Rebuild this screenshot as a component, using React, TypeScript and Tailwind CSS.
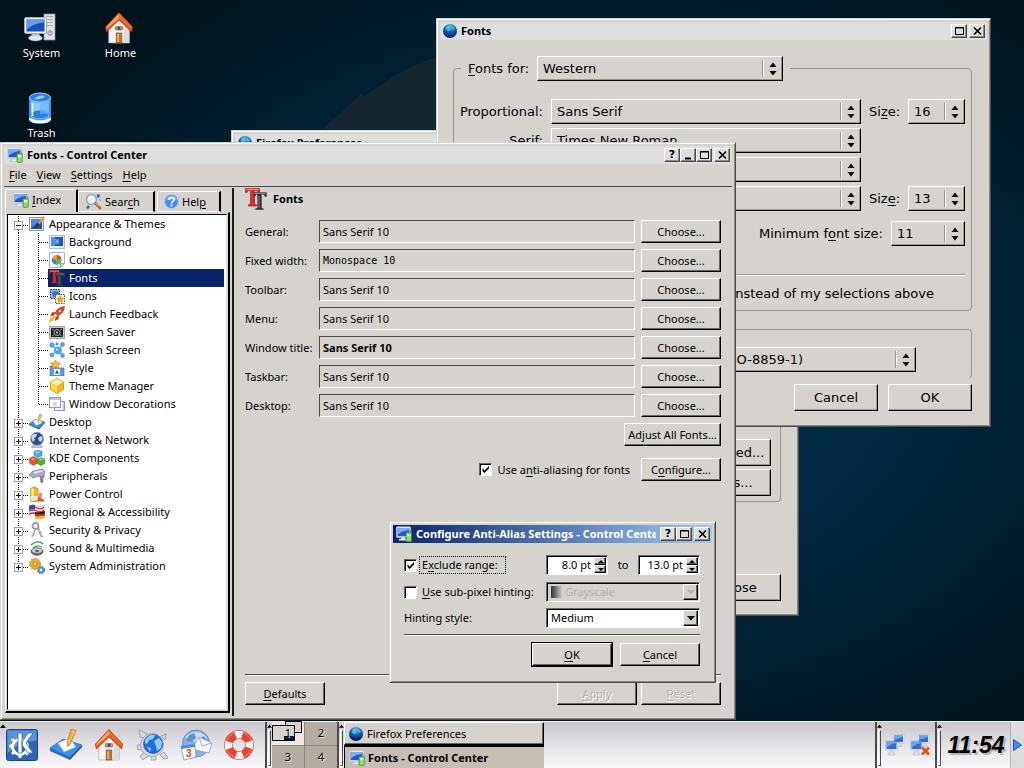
import type { ReactNode } from "react";

type IconProps = { size?: number };

/* ---------- shared class strings ---------- */

const kdeFont = "font-['Noto_Sans','DejaVu_Sans',sans-serif] text-[11px] leading-[16px]";
const gtkFont = "font-['DejaVu_Sans','Noto_Sans',sans-serif] text-[13px] leading-[18px]";
const frame =
  "absolute flex flex-col border border-[#d6d3ce] border-r-[#4c4b47] border-b-[#4c4b47] bg-[#d6d3ce] p-[3px] text-black shadow-[inset_1px_1px_0_#fff,inset_-1px_-1px_0_#8b8984]";
const raised =
  "border border-t-white border-l-white border-r-black border-b-black bg-[#d6d3ce] shadow-[inset_-1px_-1px_0_#66655f]";
const gtkRaised =
  "border border-t-white border-l-white border-r-black border-b-black bg-[#d6d3ce] shadow-[inset_-1px_-1px_0_#9c9686]";
const sunken =
  "border border-t-[#66655f] border-l-[#66655f] border-r-white border-b-white bg-white shadow-[inset_1px_1px_0_#000]";

/* ---------- icons ---------- */

function ControlIcon({ size = 16 }: IconProps) {
  return (
    <svg width={size} height={size} viewBox="0 0 16 16">
      <path d="M5 11h4v2h2v1.500H3V13h2z" fill="#e3e6ec" stroke="#a9b0bb" strokeWidth=".5" />
      <rect x=".3" y=".8" width="14.400" height="10.700" rx="1" fill="#f2f4f8" stroke="#b3bac5" strokeWidth=".6" />
      <rect x="1.500" y="2" width="12" height="8.300" fill="#2259c6" />
      <path d="M1.500 2h12v2Q6 4.500 1.500 9z" fill="#79acf4" />
      <rect x="10" y="6.500" width="5.500" height="9" rx=".8" fill="#6cc84c" stroke="#4b9a35" strokeWidth=".6" />
      <rect x="11" y="8" width="3.500" height="2.500" fill="#dcf6cd" />
      <path d="M11 12h3.500M11 13.800h3.500" stroke="#c6efb3" strokeWidth=".8" />
      <path d="M14.800 6.500V4" stroke="#888" strokeWidth=".8" />
    </svg>
  );
}

function GlobeBall({ size = 14 }: IconProps) {
  return (
    <svg width={size} height={size} viewBox="0 0 14 14">
      <defs>
        <radialGradient id="ball" cx=".5" cy=".18" r=".85">
          <stop offset="0" stopColor="#4ec0ef" />
          <stop offset=".45" stopColor="#1367b4" />
          <stop offset="1" stopColor="#020a4e" />
        </radialGradient>
      </defs>
      <circle cx="7" cy="7" r="7" fill="url(#ball)" />
      <path d="M3 3q2-2 4-1l-1 2 2 1-2 2-3-1zM9 2l3 2-1 2-2-1z" fill="#7fd4f4" opacity=".55" />
    </svg>
  );
}

function FontsIcon({ size = 16 }: IconProps) {
  return (
    <svg width={size} height={size} viewBox="0 0 22 22">
      <path d="M.5.500h14v4h-1.500l-1-2H9.500V16l2 .8V18h-8v-1.200l2-.8V2.500H3l-1 2H.500z" fill="#e8281e" stroke="#a81010" strokeWidth=".6" />
      <path d="M1.500 1.500h12" stroke="#ff9a90" />
      <path d="M8.500 4.500h13v4H20l-1-2h-2.500V20l2 .8v1h-8v-1l2-.8V6.500H11l-1 2H8.500z" fill="#2e2e2e" stroke="#555" strokeWidth=".6" />
      <path d="M9.500 5.500h11M14 8v12" stroke="#8a8a8a" />
    </svg>
  );
}

function SearchIcon() {
  return (
    <svg width="17" height="17" viewBox="0 0 17 17">
      <path d="M1 15l2-3 2 2-2 2zM12 1l3 1-1 3-2-1zM14 6l2 1-1 1z" fill="#2d63bd" />
      <circle cx="6.500" cy="6.500" r="5" fill="#e9f1f8" stroke="#9aa3ad" strokeWidth="1.500" />
      <path d="M4 6q0-2.500 3-2.500" stroke="#fff" strokeWidth="1.500" fill="none" />
      <path d="M10.500 10.500l4.500 4.500" stroke="#a8623c" strokeWidth="2.600" strokeLinecap="round" />
      <path d="M10.500 10l4 4" stroke="#edb48a" strokeWidth="1" />
    </svg>
  );
}

function HelpIcon() {
  return (
    <svg width="15" height="15" viewBox="0 0 15 15">
      <circle cx="7.500" cy="7.500" r="7" fill="#4d8bf0" stroke="#b8cdf3" />
      <path d="M2 6q1-4 5.500-4T13 6q-5-1-11 0z" fill="#86b4fa" />
      <path d="M5 6q0-2.500 2.500-2.500T10 5.500q0 1.200-1.300 2T7.500 9.500" fill="none" stroke="#fff" strokeWidth="1.600" />
      <rect x="6.600" y="10.500" width="1.800" height="1.800" fill="#fff" />
    </svg>
  );
}

// 16px artwork for the entries of the module tree, keyed by entry name
const treeArt: Record<string, ReactNode> = {
  "Appearance & Themes": (
    <>
      <rect x=".5" y="1.500" width="14" height="13" fill="#eceff4" stroke="#8f98a5" />
      <rect x="2" y="3" width="11" height="10" fill="#1b4fb4" />
      <path d="M2 3h11L2 12z" fill="#4c8be8" />
      <path d="M14.500 0L9 7l1.500 1.500L16 1.500z" fill="#e59a2c" />
      <path d="M9 7l1.500 1.500Q9 12 5 12q2-2 2-3.500z" fill="#3a3027" />
    </>
  ),
  Background: (
    <>
      <rect x=".5" y="1.500" width="15" height="13" fill="#e7ebf2" stroke="#b3bccb" />
      <rect x="2" y="3" width="12" height="9" fill="#1f56bd" />
      <path d="M2 3h4v9H2z" fill="#4f8ee4" />
      <path d="M6 5l4 5M10 5l-4 5M5.500 7.500h5M8 4.500v6" stroke="#8ab9f3" strokeWidth=".8" />
    </>
  ),
  Colors: (
    <>
      <path d="M.5.500h15v11l-4 4H.500z" fill="#fff" stroke="#b0b0b0" />
      <path d="M15.500 11.500h-4v4z" fill="#dcdcdc" stroke="#a0a0a0" />
      <path d="M7.500 8V3A4.800 4.800 0 003 6z" fill="#f6a313" />
      <path d="M7.500 8V3A4.800 4.800 0 0112.500 7z" fill="#e94234" />
      <path d="M7.500 8L12.500 7q1 4.500-4.500 6z" fill="#52b536" />
      <path d="M7.500 8L3 6Q1.500 11.500 8 13z" fill="#3e7fe2" />
    </>
  ),
  Icons: (
    <>
      <path d="M1.500 1.500h9v9h-9z" fill="#8db6f0" stroke="#333" strokeDasharray="1.500 1" />
      <path d="M3 4l3-1 4 1-1 5H4z" fill="#3a72cc" />
      <path d="M6.500 6.500h9v9h-9z" fill="#fdeecb" stroke="#555" strokeDasharray="1.500 1" />
      <path d="M11 7l1.300 2.700 2.700.3-2 2 .5 3-2.500-1.500L8.500 15l.5-3-2-2 2.700-.3z" fill="#f0992b" />
    </>
  ),
  "Launch Feedback": (
    <>
      <path d="M15.500.500Q9 1 6 7l3 3q6-3 6.500-9.500z" fill="#ea4a26" stroke="#a62b12" strokeWidth=".6" />
      <circle cx="11" cy="5" r="1.600" fill="#dceafb" stroke="#8a2a12" strokeWidth=".5" />
      <path d="M6.500 6L3 6.500 1 10l4-.5zM10 9.500l-.5 3.500-3.500 2 .5-4z" fill="#c93618" />
      <path d="M5.500 9.500L1 12l-1 4 4-1 2.500-4.500z" fill="#f9b52b" />
    </>
  ),
  "Screen Saver": (
    <>
      <rect x=".5" y="2.500" width="15" height="12" fill="#c9c9c9" stroke="#a5a5a5" />
      <rect x="2" y="4" width="12" height="9" fill="#222" />
      <circle cx="8" cy="8.500" r="3" fill="none" stroke="#a9a9a9" />
      <circle cx="8" cy="8.500" r="1" fill="#ddd" />
      <path d="M3 5l2 1M13 5l-2 1M3 12l2-1M13 12l-2-1" stroke="#888" />
    </>
  ),
  "Splash Screen": (
    <g fill="#4fa9f0" stroke="#2377c4" strokeWidth=".5">
      <circle cx="9" cy="8.500" r="3.600" />
      <circle cx="3" cy="3" r="2.300" />
      <circle cx="13.500" cy="2.500" r="2" />
      <circle cx="3" cy="13" r="2" />
      <circle cx="13.500" cy="13.500" r="2" />
      <circle cx="8" cy="2" r="1.200" />
      <path d="M4 4l4 4M13 3l-3 5M4 12l4-3M13 13l-3-4" stroke="#4fa9f0" strokeWidth="1.400" />
      <circle cx="8" cy="7.500" r="1" fill="#d9efff" stroke="none" />
    </g>
  ),
  Style: (
    <>
      <path d="M1 6h7l2 2h5v8H1z" fill="#5c9de8" stroke="#2d68b8" strokeWidth=".6" />
      <rect x="5" y="9" width="6" height="6" fill="#eef5fd" />
      <path d="M8 10l2 3.500H6z" fill="#1d4b91" />
      <path d="M6.500 0L8 3l3.500.2-2.500 2L10 9 6.500 7 3 9l1-3.800-2.500-2L5 3z" fill="#fac02a" stroke="#b9781a" strokeWidth=".6" />
    </>
  ),
  "Theme Manager": (
    <>
      <path d="M8 .5l6.500 3.500v7.500L8 15.500l-6.500-4V4z" fill="#f0b81c" stroke="#c48510" strokeWidth=".7" />
      <path d="M8 1l6 3-6 4-6-4z" fill="#fff1a2" />
      <path d="M2 4l6 4v7l-6-4z" fill="#fad84a" />
    </>
  ),
  "Window Decorations": (
    <>
      <rect x="5.500" y="5.500" width="10" height="9" fill="#f5f8fe" stroke="#8b9dc4" />
      <rect x=".5" y="1.500" width="11" height="10" fill="#fff" stroke="#8b9dc4" />
      <path d="M1 2h10v2H1zM14 6h1v8h-1z" fill="#b6c7ea" />
      <path d="M4 6l4 4M8 6l-4 4M6 5v6M3.500 8h5" stroke="#c3cbdc" strokeWidth=".8" />
    </>
  ),
  Desktop: <DesktopArt />,
  "Internet & Network": (
    <>
      <path d="M4 12.500h8l1.500 3h-11z" fill="#c2c6ce" stroke="#868d99" strokeWidth=".5" />
      <circle cx="8" cy="6.800" r="6.500" fill="#2a4c8e" stroke="#8e9db8" strokeWidth=".8" />
      <path d="M3 3q3-2 5-1L7 5 5 6l1 2-2 2Q1 6 3 3zM9 6l3-2 2 2-2 4-2-1z" fill="#cbd7ea" />
    </>
  ),
  "KDE Components": (
    <>
      <path d="M9 0l4 1.500v4L9 7.500 5 5.500v-4z" fill="#45aaf0" stroke="#1c74ba" strokeWidth=".5" />
      <path d="M4.500 6.500l4 2v4.500l-4 2.500-4-2.500V8.500z" fill="#f0512b" stroke="#af2c10" strokeWidth=".5" />
      <path d="M12 7.500l3.800 2v4L12 15.500l-3.800-2v-4z" fill="#47b83c" stroke="#207d18" strokeWidth=".5" />
      <path d="M6 2l3-1 2 1-3 2zM2 9l2.500-1L6 9l-2 1.500zM10 9.500l2-1 2 1-2 1z" fill="#fff" opacity=".5" />
    </>
  ),
  Peripherals: (
    <>
      <path d="M0 7l4-4 9-2 3 2-1 6-3 1-2-2-6 2z" fill="#a7a7c8" stroke="#66668b" strokeWidth=".6" />
      <path d="M4 4l9-2 2 1-9 3z" fill="#e0e0f0" />
      <path d="M11 9l3-1v6l-2 1z" fill="#8585ac" stroke="#66668b" strokeWidth=".5" />
    </>
  ),
  "Power Control": (
    <>
      <rect x="3" y=".5" width="4" height="2" fill="#bdbdbd" />
      <rect x="1.500" y="2" width="7.500" height="13.500" rx="1" fill="#f6b92a" stroke="#b9781a" strokeWidth=".6" />
      <path d="M2.500 2.500h2v12.500h-2z" fill="#fff2b6" />
      <rect x="1.500" y="10" width="7.500" height="4" fill="#e8e8e8" />
      <path d="M9 15.500q-1-3 1-6l2 3 3 1 .5 2z" fill="#ea4a26" />
      <path d="M10 7h3v5h-3z" fill="#f08b62" />
    </>
  ),
  "Regional & Accessibility": (
    <>
      <path d="M0 2q4-2 8 0t7-1v8q-4 2-7 1t-8 1z" fill="#f6f2f2" stroke="#98706f" strokeWidth=".4" />
      <path d="M0 4q4-2 8 0t7-1M0 7q4-2 8 0t7-1M0 10q4-2 8 0t7-1" stroke="#d63030" strokeWidth="1.300" fill="none" />
      <path d="M0 2q3-2 6-1v4q-3 0-6 1z" fill="#2f4fa5" />
      <path d="M6 8q4 1 10-1v2.500q-5 2-10 1z" fill="#1b1b1b" />
      <path d="M6 10q5 1 10-1v2.500q-5 2-10 1z" fill="#dd2a22" />
      <path d="M6 12.500q5 1 10-1v2.500q-5 2-10 1z" fill="#f7bd1f" />
    </>
  ),
  "Security & Privacy": (
    <g fill="none" stroke="#9a9a9a">
      <circle cx="6.500" cy="4" r="3" strokeWidth="1.800" />
      <path d="M6 7l-3 8M9 6l4 9" strokeWidth="2" />
      <path d="M5.500 7l-3 8M9.500 7l4 7" stroke="#ececec" strokeWidth=".8" />
      <path d="M3.500 13l2 .8M11 11l2-.8" />
    </g>
  ),
  "Sound & Multimedia": (
    <>
      <path d="M2 5q6-6 12-1M4 8q4.500-4 9-.5" fill="none" stroke="#3fae49" strokeWidth="1.400" />
      <ellipse cx="8" cy="11.500" rx="6" ry="3.800" fill="#6d6d6d" stroke="#3e3e3e" strokeWidth=".6" />
      <ellipse cx="8" cy="10.500" rx="5" ry="2.300" fill="#cfcfcf" />
      <ellipse cx="8" cy="11" rx="2" ry="1.100" fill="#555" />
    </>
  ),
  "System Administration": (
    <>
      <circle cx="12" cy="12" r="3" fill="#4fa3ef" stroke="#1f68b4" strokeWidth=".6" />
      <circle cx="12" cy="12" r="3.500" fill="none" stroke="#2f7fd0" strokeWidth="1.200" strokeDasharray="1.800 1" />
      <circle cx="6" cy="6" r="4.800" fill="#f7ae22" stroke="#bb7611" strokeWidth=".6" />
      <circle cx="6" cy="6" r="5.300" fill="none" stroke="#e4981c" strokeWidth="1.400" strokeDasharray="2.200 1.200" />
      <circle cx="6" cy="6" r="2" fill="#f1e8d4" stroke="#9a620e" strokeWidth=".8" />
      <circle cx="12" cy="12" r="1.200" fill="#fff" />
    </>
  ),
};

function DesktopArt() {
  return (
    <>
      <path d="M0 9.500L6.500 5l9.500 3-6 6.500z" fill="#3d8fe8" stroke="#1c5fb4" strokeWidth=".3" />
      <path d="M0 9.500l10 4.500v1.500L0 11z" fill="#2a6cc4" />
      <path d="M10 14l6-6v1l-6 6.500z" fill="#1d56a6" />
      <path d="M4 7l6-2.500L13 9l-6 2.500z" fill="#f6f9fd" stroke="#9fb4cd" strokeWidth=".3" />
      <path d="M10.500 0l2.500.8-3 7-1.200 1L8.500 7z" fill="#f8a623" stroke="#b46d10" strokeWidth=".3" />
      <path d="M11 1l1 .3-3 6" fill="none" stroke="#ffd98a" strokeWidth=".5" />
    </>
  );
}

function ModuleIcon({ name }: { name: string }) {
  if (name === "Fonts") return <FontsIcon />;
  return (
    <svg width="16" height="16" viewBox="0 0 16 16">
      {treeArt[name]}
    </svg>
  );
}

function HomeArt() {
  return (
    <svg width="30" height="32" viewBox="0 0 32 32" preserveAspectRatio="none">
      <path d="M5 15v16h22V15L16 5z" fill="#f3f3f4" stroke="#a9a9ad" strokeWidth=".7" />
      <path d="M20 31h7V16l-5-5z" fill="#dcdce0" />
      <rect x="13" y="21" width="6" height="10" fill="#c9722e" stroke="#8a4a1c" strokeWidth=".7" />
      <path d="M14 22h2v8h-2z" fill="#eda768" />
      <rect x="12" y="14.500" width="8" height="3.500" rx="1" fill="#b29a85" stroke="#6a5848" strokeWidth=".6" />
      <circle cx="16" cy="16.200" r="1.500" fill="#4c4038" />
      <path d="M16 .5L1.500 15l1 5L16 8l13.500 12 1-5z" fill="#e8541d" stroke="#a53410" strokeWidth=".7" />
      <path d="M16 1.500L3 14.500 2.500 17 16 6z" fill="#ffa266" />
      <path d="M16 1.500V6l13 11V14z" fill="#f2682c" />
    </svg>
  );
}

function SystemArt() {
  return (
    <svg width="32" height="30" viewBox="0 0 32 30">
      <rect x="20" y="1" width="11" height="26" fill="#e2e2e5" stroke="#96969c" strokeWidth=".7" />
      <path d="M22 3.500h7M22 6.500h7M22 9.500h7M22 12.500h7" stroke="#a6a6ac" />
      <circle cx="26" cy="20" r="2.300" fill="#c4c4c9" stroke="#74747a" strokeWidth=".7" />
      <path d="M8 20h7l1 3h-9z" fill="#c6c8ce" />
      <ellipse cx="11.500" cy="25" rx="7" ry="3" fill="#e6e7ec" stroke="#9a9ca4" strokeWidth=".5" />
      <rect x=".5" y="4.500" width="22" height="16" rx="1.500" fill="#f2f3f6" stroke="#a3a7b0" />
      <rect x="2.500" y="6.500" width="18" height="12" fill="#1d4fb0" />
      <path d="M2.500 6.500h18v3Q9 10 2.500 17z" fill="#5f9bea" />
    </svg>
  );
}

function TrashArt() {
  return (
    <svg width="24" height="32" viewBox="0 0 24 32">
      <path d="M1 5v22Q2 31.500 12 31.500T23 27V5z" fill="#3f92f2" />
      <path d="M3 9v16q9 4.500 18 0V9Q12 13 3 9z" fill="#8fcbfd" />
      <ellipse cx="12" cy="22.500" rx="9" ry="4" fill="#2c7de0" />
      <path d="M12 10h9v13q-4-2-9-1z" fill="#6db4fa" opacity=".7" />
      <path d="M1 25.500Q12 31 23 25.500V28q-2 3.500-11 3.500T1 28z" fill="#f1f6fd" />
      <ellipse cx="12" cy="5.500" rx="10.500" ry="4.500" fill="#2a7ce4" stroke="#9bd0ff" strokeWidth="1" />
      <path d="M6 7q5-5 11-3-3 4-11 3z" fill="#8ecbff" />
      <path d="M4.500 11v13" stroke="#e6f4ff" strokeWidth="1.600" />
    </svg>
  );
}

function KMenuArt() {
  return (
    <svg width="32" height="32" viewBox="0 0 32 32">
      <rect x=".5" y=".5" width="31" height="31" rx="2" fill="#2c67b5" stroke="#184887" />
      <path d="M1.500 1.500h29v10Q12 13 1.500 24z" fill="#5b93d8" />
      <circle cx="14" cy="18" r="7.500" fill="none" stroke="#fff" strokeWidth="3" />
      <g stroke="#fff" strokeWidth="3">
        <path d="M3.500 17h4M6 25l3-3M14 25v4M22 25.500l-3-3M6 10l3 3" />
      </g>
      <path d="M12 4h4v20h-4zM16 13l6-9h5l-7 10 7 10h-5l-6-8z" fill="#fff" stroke="#2c67b5" strokeWidth=".8" />
    </svg>
  );
}

function KonquerorArt() {
  return (
    <svg width="32" height="32" viewBox="0 0 32 32">
      <g fill="#d7dae0" stroke="#868b95" strokeWidth=".7">
        <path d="M3 1l8 4-3 4-4-1zM1 16l6-1 1 5-6 1zM4 27l5-4 3 4-5 4zM15 31l1-6h4v6zM24 26l4-3 4 6-4 1zM25 7l5-2-1 6z" />
        <circle cx="16" cy="16" r="11.500" />
      </g>
      <circle cx="17" cy="15" r="9.500" fill="#1f6fe0" stroke="#0f409a" strokeWidth=".6" />
      <path d="M9 11q4-6 10-5l-2 4-4 1-1 3-3 1zM18 12l5-3 3 4-1 6-4 3-1-5zM11 18l4 1-1 4z" fill="#8fd0fb" />
    </svg>
  );
}

function KontactArt() {
  return (
    <svg width="32" height="32" viewBox="0 0 32 32">
      <circle cx="16" cy="14.500" r="13.500" fill="#86b4e6" stroke="#5282bb" strokeWidth=".8" />
      <path d="M5 8Q16-2 27 8q-5 6-11 5T5 8z" fill="#c6ddf6" />
      <path d="M9 6l5-2 2 5-5 4-5-1zM19 10l5-3 3 6-4 3z" fill="#5d92cf" />
      <path d="M1 17l14-2 1 13-12 3z" fill="#fff" stroke="#6b86b7" strokeWidth=".7" />
      <path d="M1 17l14-2v3L1.500 20z" fill="#4c8ae0" />
      <text x="6" y="28" fontSize="10" fontWeight="bold" fill="#e23b26" fontFamily="Liberation Sans">3</text>
      <path d="M15 14l4-6 13 6-3 10-14-3z" fill="#f5f4fc" stroke="#8a88b4" strokeWidth=".7" />
      <path d="M19 8.500l3 8.500 9.500-3" fill="none" stroke="#9a98c2" strokeWidth=".8" />
    </svg>
  );
}

function LifebuoyArt() {
  return (
    <svg width="30" height="30" viewBox="0 0 30 30">
      <circle cx="15" cy="15" r="10.500" fill="none" stroke="#b73222" strokeWidth="8.600" />
      <circle cx="15" cy="15" r="10.500" fill="none" stroke="#f6f3f2" strokeWidth="7.600" />
      <circle cx="15" cy="15" r="10.500" fill="none" stroke="#e5432c" strokeWidth="7.600" strokeDasharray="9.500 7" strokeDashoffset="-3" />
      <circle cx="15" cy="15" r="13" fill="none" stroke="#fff" strokeWidth="1" opacity=".35" />
    </svg>
  );
}

function NetworkArt({ broken = false }: { broken?: boolean }) {
  return (
    <svg width="20" height="22" viewBox="0 0 20 22">
      <g stroke="#b4b9c2" strokeWidth=".6">
        <rect x="8" y=".5" width="11" height="8.500" fill="#f2f4f8" />
        <path d="M12 9h3v2h2v1.500h-7V11h2z" fill="#dcdfe6" />
        <rect x=".5" y="6.500" width="12" height="9.500" fill="#f2f4f8" />
        <path d="M5 16h3v3h2v2H3v-2h2z" fill="#dcdfe6" />
      </g>
      <rect x="9" y="1.500" width="9" height="6.500" fill="#2f6fd8" />
      <rect x="1.500" y="7.500" width="10" height="7.500" fill="#2f6fd8" />
      <path d="M1.500 7.500h10V9Q5 10 1.500 14zM9 1.500h9v1.500L9 6z" fill="#69a2f0" />
      {broken && <path d="M12 13.500l7 7M19 13.500l-7 7" stroke="#ee4a1c" strokeWidth="2.600" />}
    </svg>
  );
}

/* ---------- window parts ---------- */

const glyphs: Record<string, ReactNode> = {
  Minimize: <path d="M3 9.500h6" stroke="#000" strokeWidth="2" />,
  Maximize: <path d="M2.500 2.500h8v7h-8zM2.500 3h8" fill="none" stroke="#000" />,
  Close: <path d="M3 2.500l7 7M10 2.500l-7 7" stroke="#000" strokeWidth="1.600" />,
};

function TitleButton({ name }: { name: string }) {
  return (
    <button
      aria-label={name}
      className="flex h-[14px] w-[16px] items-center justify-center border border-t-white border-l-white border-r-[#4c4b47] border-b-[#4c4b47] bg-[#dedede] font-['DejaVu_Sans',sans-serif] text-[11px] leading-[12px] font-bold text-black shadow-[inset_-1px_-1px_0_#8b8984]"
    >
      {name === "Help" ? "?" : <svg width="13" height="12" viewBox="0 0 13 12">{glyphs[name]}</svg>}
    </button>
  );
}

type TitleBarProps = { icon: ReactNode; title: string; buttons: string[]; active?: boolean };

function TitleBar({ icon, title, buttons, active }: TitleBarProps) {
  return (
    <header
      className={`flex h-[18px] shrink-0 items-center gap-1 pr-[2px] pl-[3px] ${
        active ? "bg-linear-to-r from-[#0a246a] to-[#a6caf0] text-white" : "bg-[#dedede]"
      }`}
    >
      <span className="shrink-0">{icon}</span>
      <h2 className={`${kdeFont} min-w-0 flex-1 overflow-hidden font-bold whitespace-nowrap`}>{title}</h2>
      <div className="flex shrink-0">
        {buttons.map((name) => (
          <span key={name} className={name === "Close" ? "ml-[2px]" : ""}>
            <TitleButton name={name} />
          </span>
        ))}
      </div>
    </header>
  );
}

// Underlines the accelerator letter at the given index
function Accel({ text, at }: { text: string; at: number }) {
  return (
    <span className="whitespace-pre">
      {text.slice(0, at)}
      <u className="underline-offset-2">{text[at]}</u>
      {text.slice(at + 1)}
    </span>
  );
}

function CheckBox({ id, checked }: { id: string; checked?: boolean }) {
  return (
    <span className="grid">
      <input
        id={id}
        type="checkbox"
        defaultChecked={checked}
        className={`peer col-start-1 row-start-1 h-[13px] w-[13px] appearance-none ${sunken}`}
      />
      <svg
        className="pointer-events-none invisible col-start-1 row-start-1 peer-checked:visible"
        width="13"
        height="13"
        viewBox="0 0 13 13"
      >
        <path d="M3.500 5v3l2 2 4.500-4.500V3L5.500 7.500z" fill="#000" />
      </svg>
    </span>
  );
}

function GtkSelect({ label, value, className }: { label: string; value: string; className: string }) {
  return (
    <span className={`relative flex h-[25px] ${className}`}>
      <select aria-label={label} className={`h-full w-full appearance-none pr-[22px] pl-[5px] ${gtkRaised}`}>
        <option>{value}</option>
      </select>
      <span className="pointer-events-none absolute inset-y-[4px] right-[6px] flex items-center border-l border-[#9c9686] pl-[6px] shadow-[inset_1px_0_0_#fff]">
        <svg width="8" height="14" viewBox="0 0 8 14">
          <path d="M.5 5L4 .5 7.500 5zM.5 9L4 13.500 7.500 9z" fill="#000" />
        </svg>
      </span>
    </span>
  );
}

function GtkButton({ children, className }: { children: ReactNode; className: string }) {
  return <button className={`h-[27px] ${gtkRaised} ${className}`}>{children}</button>;
}

/* ---------- firefox windows ---------- */

function PreferencesWindow() {
  return (
    <section className={`${frame} ${gtkFont} top-[130px] left-[231px] h-[486px] w-[568px]`}>
      <TitleBar icon={<GlobeBall />} title="Firefox Preferences" buttons={["Maximize", "Close"]} />
      <div className="flex flex-1 flex-col items-end justify-end pr-[14px] pb-[11px]">
        <div className="mb-[72px] flex w-full flex-1 flex-col items-end justify-end gap-[3px] rounded-br border-r border-b border-[#9c9686] pr-[9px] pb-[5px]">
          <GtkButton className="w-[90px]">Advanced...</GtkButton>
          <GtkButton className="w-[90px]">Colors...</GtkButton>
        </div>
        <GtkButton className="w-[84px]">Close</GtkButton>
      </div>
    </section>
  );
}

const families = [
  { label: "Proportional:", value: "Sans Serif", size: "16", at: 2 },
  { label: "Serif:", value: "Times New Roman" },
  { label: "", value: "" },
  { label: "", value: "", size: "13", at: 3 },
];

function FirefoxFontsWindow() {
  return (
    <section className={`${frame} ${gtkFont} top-[18px] left-[436px] w-[555px]`}>
      <TitleBar icon={<GlobeBall />} title="Fonts" buttons={["Maximize", "Close"]} />
      <div className="flex flex-col pt-4 pr-[15px] pb-[12px] pl-[13px]">
        <fieldset className="flex flex-col rounded border border-[#9c9686] pr-[6px] pl-[7px]">
          <legend className="flex h-[25px] items-center justify-between gap-[7px] px-[7px]">
            <span className="w-[62px]"><Accel text="Fonts for:" at={0} /></span>
            <GtkSelect label="Fonts for" value="Western" className="w-[246px]" />
          </legend>
          <div className="mt-[18px] flex flex-col gap-1">
            {families.map((row, i) => (
              <div key={i} className="flex items-center gap-2">
                <span className="flex w-[82px] justify-end">{row.label}</span>
                <GtkSelect label={row.label} value={row.value} className="flex-1" />
                <span className="w-[31px]">{row.size && <Accel text="Size:" at={row.at ?? 0} />}</span>
                {row.size ? (
                  <GtkSelect label="Size" value={row.size} className="w-[57px]" />
                ) : (
                  <span className="w-[57px]" />
                )}
              </div>
            ))}
          </div>
          <div className="mt-[10px] flex items-center justify-end gap-2">
            <Accel text="Minimum font size:" at={9} />
            <GtkSelect label="Minimum font size" value="11" className="w-[74px]" />
          </div>
          <hr className="mt-7 border-t border-[#9c9686] shadow-[0_1px_0_#fff]" />
          <p className="mt-[10px] mb-[7px] pr-[31px] text-right whitespace-nowrap">instead of my selections above</p>
        </fieldset>
        <div className="mt-[18px] flex h-[49px] justify-end rounded border border-b-0 border-[#9c9686] pt-[17px] pr-[55px]">
          <GtkSelect label="Character encoding" value="Western (ISO-8859-1)" className="w-[260px]" />
        </div>
        <div className="mt-[6px] flex justify-end gap-[10px]">
          <GtkButton className="w-[84px]">Cancel</GtkButton>
          <GtkButton className="w-[84px]">OK</GtkButton>
        </div>
      </div>
    </section>
  );
}

/* ---------- control center ---------- */

const children = [
  "Background", "Colors", "Fonts", "Icons", "Launch Feedback", "Screen Saver",
  "Splash Screen", "Style", "Theme Manager", "Window Decorations",
];

const groups = [
  "Desktop", "Internet & Network", "KDE Components", "Peripherals", "Power Control",
  "Regional & Accessibility", "Security & Privacy", "Sound & Multimedia", "System Administration",
];

function Expander({ open, first, last }: { open?: boolean; first?: boolean; last?: boolean }) {
  return (
    <svg width="21" height="18" viewBox="0 0 21 18" shapeRendering="crispEdges">
      <path d={`M10.500 ${first ? 1 : 0}V${last ? 9 : 18}M15 10.500h6`} stroke="#000" strokeDasharray="1 1" />
      <path d="M6.500 6.500h8v8h-8z" fill="#fff" stroke="#a5a29b" />
      <path d={open ? "M8 10.500h5" : "M8 10.500h5M10.500 8v5"} stroke="#000" />
    </svg>
  );
}

function Branch({ last }: { last?: boolean }) {
  return (
    <svg width="40" height="18" viewBox="0 0 40 18" shapeRendering="crispEdges">
      <path d={`M10.500 0V18M30.500 0V${last ? 10 : 18}M31 9.500h9`} stroke="#000" strokeDasharray="1 1" />
    </svg>
  );
}

function ModuleTree() {
  return (
    <ul className="min-h-0 flex-1 overflow-hidden border border-black border-r-[#e6e2dc] border-b-[#e6e2dc] bg-white">
      <li>
        <div className="flex h-[18px] items-center">
          <Expander open first />
          <ModuleIcon name="Appearance & Themes" />
          <span className="pl-1">Appearance &amp; Themes</span>
        </div>
        <ul>
          {children.map((name, i) => (
            <li key={name} className="flex h-[18px] pr-[2px]">
              <Branch last={i === children.length - 1} />
              <span
                className={`flex flex-1 items-center gap-1 pl-px ${name === "Fonts" ? "bg-[#0a246a] text-white" : ""}`}
              >
                <ModuleIcon name={name} />
                {name}
              </span>
            </li>
          ))}
        </ul>
      </li>
      {groups.map((name, i) => (
        <li key={name} className="flex h-[18px] items-center">
          <Expander last={i === groups.length - 1} />
          <ModuleIcon name={name} />
          <span className="pl-1">{name}</span>
        </li>
      ))}
    </ul>
  );
}

const tab = "flex items-center gap-[3px] border-t border-l border-r-2 border-t-white border-l-white border-r-black pl-[6px]";

function Sidebar() {
  return (
    <aside className="flex w-[226px] shrink-0 flex-col pt-[2px] pb-[3px] pl-px">
      <div className="flex h-[23px] items-end" role="tablist">
        <button role="tab" aria-selected="true" className={`${tab} h-full w-[73px] pb-[2px] pl-[7px]`}>
          <ControlIcon />
          <Accel text="Index" at={0} />
        </button>
        <button role="tab" aria-selected="false" className={`${tab} h-[21px] w-[77px] border-b border-b-white`}>
          <SearchIcon />
          <Accel text="Search" at={4} />
        </button>
        <button role="tab" aria-selected="false" className={`${tab} ml-[2px] h-[21px] w-[64px] border-b border-b-white`}>
          <HelpIcon />
          <Accel text="Help" at={3} />
        </button>
      </div>
      <div className="flex min-h-0 flex-1 flex-col border border-l-white border-t-transparent border-r-2 border-b-2 border-r-black border-b-black p-px">
        <ModuleTree />
      </div>
    </aside>
  );
}

const fontRows = [
  { label: "General:", value: "Sans Serif 10" },
  { label: "Fixed width:", value: "Monospace 10" },
  { label: "Toolbar:", value: "Sans Serif 10" },
  { label: "Menu:", value: "Sans Serif 10" },
  { label: "Window title:", value: "Sans Serif 10" },
  { label: "Taskbar:", value: "Sans Serif 10" },
  { label: "Desktop:", value: "Sans Serif 10" },
];

function FontsModule() {
  return (
    <div className="flex flex-1 flex-col pr-[11px] pb-[11px] pl-[11px]">
      <div className="mb-[10px] flex h-[22px] items-center gap-[6px]">
        <FontsIcon size={22} />
        <h3 className="font-bold">Fonts</h3>
      </div>
      <div className="flex flex-col gap-[6px]">
        {fontRows.map(({ label, value }) => (
          <div key={label} className="flex h-[23px] items-center">
            <label htmlFor={label} className="w-[74px]">{label}</label>
            <input
              id={label}
              readOnly
              defaultValue={value}
              className={`h-full min-w-0 flex-1 border border-t-[#4c4b47] border-l-[#4c4b47] border-r-white border-b-white px-[3px] ${
                label === "Window title:" ? "font-bold" : ""
              } ${label === "Fixed width:" ? "font-['DejaVu_Sans_Mono',monospace] text-[10px]" : ""}`}
            />
            <button className={`ml-[6px] h-full w-[80px] ${raised}`}>Choose...</button>
          </div>
        ))}
      </div>
      <div className="mt-[6px] flex justify-end">
        <button className={`h-[23px] w-[97px] ${raised}`}>
          <Accel text="Adjust All Fonts..." at={2} />
        </button>
      </div>
      <div className="mt-3 flex items-center justify-end">
        <CheckBox id="antialias" checked />
        <label htmlFor="antialias" className="pr-[11px] pl-[5px]">
          <Accel text="Use anti-aliasing for fonts" at={5} />
        </label>
        <button className={`h-[23px] w-[80px] ${raised}`}>
          <Accel text="Configure..." at={1} />
        </button>
      </div>
      <div className="flex-1" />
      <hr className="mb-[7px] border-t border-[#4c4b47] shadow-[0_1px_0_#fff]" />
      <div className="flex h-[23px] gap-1">
        <button className={`w-[80px] ${raised}`}><Accel text="Defaults" at={0} /></button>
        <span className="flex-1" />
        {["Apply", "Reset"].map((name) => (
          <button
            key={name}
            disabled
            className={`w-[80px] text-[#b5b1aa] [text-shadow:1px_1px_0_#fff] ${raised}`}
          >
            <Accel text={name} at={0} />
          </button>
        ))}
      </div>
    </div>
  );
}

function ControlCenterWindow() {
  return (
    <section className={`${frame} ${kdeFont} top-[142px] bottom-px left-0 w-[736px]`}>
      <TitleBar
        icon={<ControlIcon />}
        title="Fonts - Control Center"
        buttons={["Help", "Minimize", "Maximize", "Close"]}
      />
      <nav className="flex h-[23px] shrink-0 items-center gap-[10px] border-b border-[#4c4b47] px-[5px]">
        {["File", "View", "Settings", "Help"].map((name) => (
          <button key={name}><Accel text={name} at={0} /></button>
        ))}
      </nav>
      <div className="flex min-h-0 flex-1">
        <Sidebar />
        <div className="mt-px ml-[2px] flex flex-1 border-l-2 border-[#1b1b19]">
          <FontsModule />
        </div>
      </div>
    </section>
  );
}

/* ---------- anti-alias dialog ---------- */

function SpinBox({ label, value }: { label: string; value: string }) {
  return (
    <span className={`flex h-[20px] w-[62px] p-px ${sunken}`}>
      <input aria-label={label} defaultValue={value} className="w-full min-w-0 flex-1 pr-[3px] text-right" />
      <span className="flex w-[12px] flex-col">
        {["M2 5h6L5 2z", "M2 2h6L5 5z"].map((d, i) => (
          <button key={d} aria-label={i ? "Down" : "Up"} className={`flex flex-1 items-center justify-center ${raised}`}>
            <svg width="9" height="6" viewBox="0 0 9 6"><path d={d} /></svg>
          </button>
        ))}
      </span>
    </span>
  );
}

type ComboProps = { id: string; value: string; disabled?: boolean };

function Combo({ id, value, disabled }: ComboProps) {
  return (
    <span className={`relative flex h-[20px] w-[154px] ${disabled ? "text-[#b5b1aa]" : ""}`}>
      <select
        id={id}
        disabled={disabled}
        className={`w-full appearance-none disabled:opacity-100 ${sunken} ${disabled ? "!bg-[#d6d3ce] pl-[18px]" : "pl-[4px]"}`}
      >
        <option>{value}</option>
      </select>
      {disabled && (
        <span className="pointer-events-none absolute inset-y-[4px] left-[5px] w-[12px] bg-linear-to-r from-[#333] to-[#ddd]" />
      )}
      <span className={`pointer-events-none absolute inset-y-[2px] right-[2px] flex w-[15px] items-center justify-center ${raised}`}>
        <svg width="8" height="5" viewBox="0 0 8 5">
          <path d="M0 0h8L4 4.500z" fill={disabled ? "#b5b1aa" : "#000"} />
        </svg>
      </span>
    </span>
  );
}

function AntiAliasDialog() {
  return (
    <section role="dialog" className={`${frame} ${kdeFont} top-[521px] left-[389px] w-[327px]`}>
      <TitleBar
        active
        icon={<ControlIcon />}
        title="Configure Anti-Alias Settings - Control Center"
        buttons={["Help", "Maximize", "Close"]}
      />
      <div className="pt-[12px] pr-[12px] pb-[12px] pl-[11px]">
        <div className="flex h-[20px] items-center">
          <CheckBox id="exclude" checked />
          <label htmlFor="exclude" className="ml-[2px] w-[87px] border border-dotted border-black px-[2px]">
            <Accel text="Exclude range:" at={1} />
          </label>
          <div className="ml-auto flex w-[154px] items-center justify-between">
            <SpinBox label="From" value="8.0 pt" />
            to
            <SpinBox label="To" value="13.0 pt" />
          </div>
        </div>
        <div className="mt-[7px] flex items-center">
          <CheckBox id="subpixel" />
          <label htmlFor="subpixel" className="flex-1 pl-[5px]">
            <Accel text="Use sub-pixel hinting:" at={0} />
          </label>
          <Combo id="subpixel-type" value="Grayscale" disabled />
        </div>
        <div className="mt-[6px] flex items-center">
          <label htmlFor="hinting" className="flex-1">Hinting style:</label>
          <Combo id="hinting" value="Medium" />
        </div>
        <hr className="mt-[6px] border-t border-[#4c4b47] shadow-[0_1px_0_#fff]" />
        <div className="mt-[7px] flex items-center justify-end gap-[7px]">
          <button className="h-[25px] w-[82px] border border-black">
            <span className={`flex h-full items-center justify-center ${raised}`}><Accel text="OK" at={0} /></span>
          </button>
          <button className={`h-[23px] w-[80px] ${raised}`}><Accel text="Cancel" at={0} /></button>
        </div>
      </div>
    </section>
  );
}

/* ---------- desktop and panel ---------- */

function DesktopIcon({ label, children }: { label: string; children: ReactNode }) {
  return (
    <a
      href="#"
      className={`${kdeFont} flex h-[80px] flex-col items-center justify-start gap-[1px] text-white [text-shadow:1px_1px_1px_#000]`}
    >
      <span className="flex h-[32px] items-center pr-1">{children}</span>
      {label}
    </a>
  );
}

function Wallpaper() {
  return (
    <svg className="absolute inset-0 h-full w-full" viewBox="0 0 1024 721" preserveAspectRatio="none">
      <defs>
        <radialGradient id="sky" cx=".58" cy=".5" r=".64">
          <stop offset="0" stopColor="#033250" />
          <stop offset=".45" stopColor="#022a42" />
          <stop offset="1" stopColor="#01131b" />
        </radialGradient>
      </defs>
      <rect width="1024" height="721" fill="url(#sky)" />
      <path d="M322 130l40-37 2 4q36-28 74-41v80z" fill="#152631" />
    </svg>
  );
}

function Handle() {
  return (
    <span className="flex w-[7px] shrink-0 flex-col items-center border-l-2 border-[#4c4b47]">
      <svg width="5" height="8" viewBox="0 0 6 8"><path d="M0 6l3-3.500L6 6z" /></svg>
      <span className="mb-[2px] w-[3px] flex-1 border border-t-white border-l-white border-r-[#4c4b47] border-b-[#4c4b47]" />
    </span>
  );
}

const launchers = [
  { name: "K Menu", art: <KMenuArt /> },
  { name: "Show Desktop", art: <svg width="32" height="32" viewBox="0 0 16 16"><DesktopArt /></svg> },
  { name: "Home", art: <HomeArt /> },
  { name: "Konqueror", art: <KonquerorArt /> },
  { name: "Kontact", art: <KontactArt /> },
  { name: "Help Center", art: <LifebuoyArt /> },
];

function Panel() {
  return (
    <footer
      className={`${kdeFont} flex h-[47px] shrink-0 border-t border-[#f0eeec] bg-linear-to-b from-[#c9c7cb] via-[#e4e2e6] to-[#faf8fb] text-black`}
    >
      <div className="flex w-[265px] shrink-0">
        <svg width="6" height="8" viewBox="0 0 6 8"><path d="M0 6l3-3.500L6 6z" /></svg>
        <div className="flex flex-1 items-center gap-[12px]">
          {launchers.map(({ name, art }) => (
            <button key={name} aria-label={name}>{art}</button>
          ))}
        </div>
      </div>
      <Handle />
      <div className="grid w-[65px] shrink-0 grid-cols-2 grid-rows-2 gap-px bg-[#8b8984]">
        {["1", "2", "3", "4"].map((n) => (
          <button
            key={n}
            className={`grid items-center justify-center [text-shadow:1px_1px_0_#e6e2dc] ${
              n === "1" ? "bg-[#efe6e0]" : "bg-[#b5aca3]"
            }`}
          >
            <span className="relative">
              {n === "1" && (
                <svg className="absolute -top-[4px] -left-[13px]" width="32" height="21" viewBox="0 0 32 21">
                  <path d="M13.500.500h16v11h-16z" fill="#d6d3ce" stroke="#000" />
                  <path d="M.5 4.500h22v15H.500z" fill="#d6d3ce" stroke="#000" />
                  <path d="M12.500 15.500h9v3h-9z" fill="#0a246a" stroke="#000" />
                </svg>
              )}
              <span className="relative">{n}</span>
            </span>
          </button>
        ))}
      </div>
      <Handle />
      <div className="flex min-w-0 flex-1">
        <div className="flex w-[200px] flex-col">
          <button className={`flex h-[23px] items-center gap-1 pl-[4px] ${raised}`}>
            <GlobeBall />
            Firefox Preferences
          </button>
          <button className="flex flex-1 items-center gap-[3px] border-t-2 border-l border-black bg-[#c6beb5] pl-[4px] font-bold">
            <ControlIcon />
            Fonts - Control Center
          </button>
        </div>
      </div>
      <Handle />
      <div className="flex w-[53px] shrink-0 items-center gap-[5px] pl-[3px]">
        <NetworkArt />
        <NetworkArt broken />
      </div>
      <Handle />
      <time className="flex w-[68px] shrink-0 items-center justify-center font-['Liberation_Sans',sans-serif] text-[23px] leading-[28px] font-bold italic [text-shadow:2px_2px_0_#b9b4ac]">
        11:54
      </time>
      <button aria-label="Hide panel" className="flex w-[14px] shrink-0 items-center justify-center border-l border-[#b5b1aa] bg-[#dddbde]">
        <svg width="9" height="12" viewBox="0 0 9 12">
          <path d="M.5.500L8.500 6l-8 5.500z" fill="#3c8df0" stroke="#1557b0" />
        </svg>
      </button>
    </footer>
  );
}

export default function App() {
  return (
    <div className="flex h-screen w-full flex-col overflow-hidden bg-[#01131b]">
      <main className="relative min-h-0 flex-1 overflow-hidden">
        <Wallpaper />
        <div className="relative grid w-[160px] grid-cols-2 pt-[12px] pl-[2px]">
          <DesktopIcon label="System"><SystemArt /></DesktopIcon>
          <DesktopIcon label="Home"><HomeArt /></DesktopIcon>
          <DesktopIcon label="Trash"><TrashArt /></DesktopIcon>
        </div>
        <PreferencesWindow />
        <FirefoxFontsWindow />
        <ControlCenterWindow />
        <AntiAliasDialog />
      </main>
      <Panel />
    </div>
  );
}
